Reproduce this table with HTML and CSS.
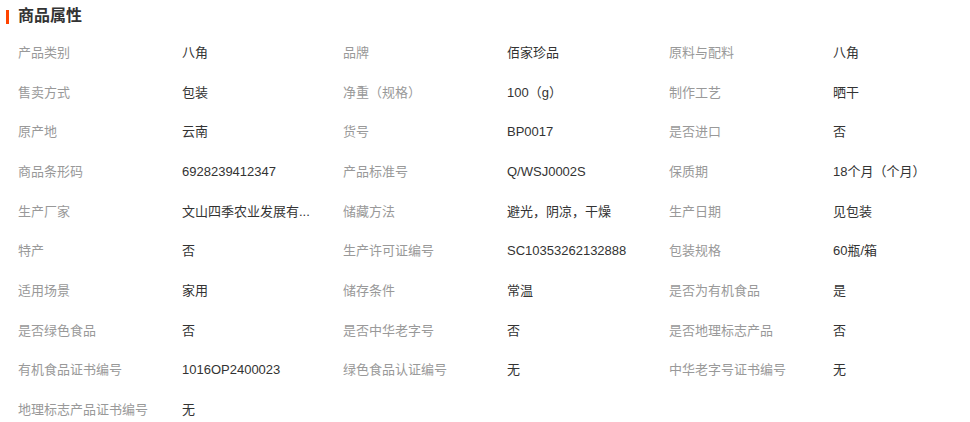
FILE: index.html
```html
<!DOCTYPE html>
<html lang="zh-CN">
<head>
  <meta charset="UTF-8">
  <title>商品属性</title>
  <link rel="stylesheet" href="styles.css">
</head>
<body>
  <div class="attrs">
    <h2 class="attrs-title">商品属性</h2>
    <div class="attrs-grid">
      <div class="label">产品类别</div><div class="value">八角</div>
      <div class="label">品牌</div><div class="value">佰家珍品</div>
      <div class="label">原料与配料</div><div class="value">八角</div>

      <div class="label">售卖方式</div><div class="value">包装</div>
      <div class="label">净重（规格）</div><div class="value">100（g）</div>
      <div class="label">制作工艺</div><div class="value">晒干</div>

      <div class="label">原产地</div><div class="value">云南</div>
      <div class="label">货号</div><div class="value">BP0017</div>
      <div class="label">是否进口</div><div class="value">否</div>

      <div class="label">商品条形码</div><div class="value">6928239412347</div>
      <div class="label">产品标准号</div><div class="value">Q/WSJ0002S</div>
      <div class="label">保质期</div><div class="value">18个月（个月）</div>

      <div class="label">生产厂家</div><div class="value" title="文山四季农业发展有限公司">文山四季农业发展有...</div>
      <div class="label">储藏方法</div><div class="value">避光，阴凉，干燥</div>
      <div class="label">生产日期</div><div class="value">见包装</div>

      <div class="label">特产</div><div class="value">否</div>
      <div class="label">生产许可证编号</div><div class="value">SC10353262132888</div>
      <div class="label">包装规格</div><div class="value">60瓶/箱</div>

      <div class="label">适用场景</div><div class="value">家用</div>
      <div class="label">储存条件</div><div class="value">常温</div>
      <div class="label">是否为有机食品</div><div class="value">是</div>

      <div class="label">是否绿色食品</div><div class="value">否</div>
      <div class="label">是否中华老字号</div><div class="value">否</div>
      <div class="label">是否地理标志产品</div><div class="value">否</div>

      <div class="label">有机食品证书编号</div><div class="value">1016OP2400023</div>
      <div class="label">绿色食品认证编号</div><div class="value">无</div>
      <div class="label">中华老字号证书编号</div><div class="value">无</div>

      <div class="label">地理标志产品证书编号</div><div class="value">无</div>
    </div>
  </div>
</body>
</html>
```

FILE: styles.css
```css
body {
  margin: 0;
  background: #fff;
  font-family: 'Liberation Sans', 'Noto Sans CJK SC', sans-serif;
  font-size: 13px;
  color: #333;
}

.attrs {
  width: 970px;
}

.attrs-title {
  position: relative;
  margin: 0;
  height: 33px;
  line-height: 32px;
  padding-left: 18px;
  font-size: 16px;
  font-weight: bold;
  color: #333;
}

.attrs-title::before {
  content: '';
  position: absolute;
  left: 6px;
  top: 10px;
  width: 3px;
  height: 14px;
  background: #ff4400;
}

.attrs-grid {
  display: grid;
  grid-template-columns: 164px 161px 164px 162px 164px 130px;
  grid-auto-rows: 39.67px;
  padding-left: 18px;
}

.label,
.value {
  line-height: 39.67px;
  white-space: nowrap;
}

.label {
  color: #999;
}

.value {
  color: #333;
}
```
